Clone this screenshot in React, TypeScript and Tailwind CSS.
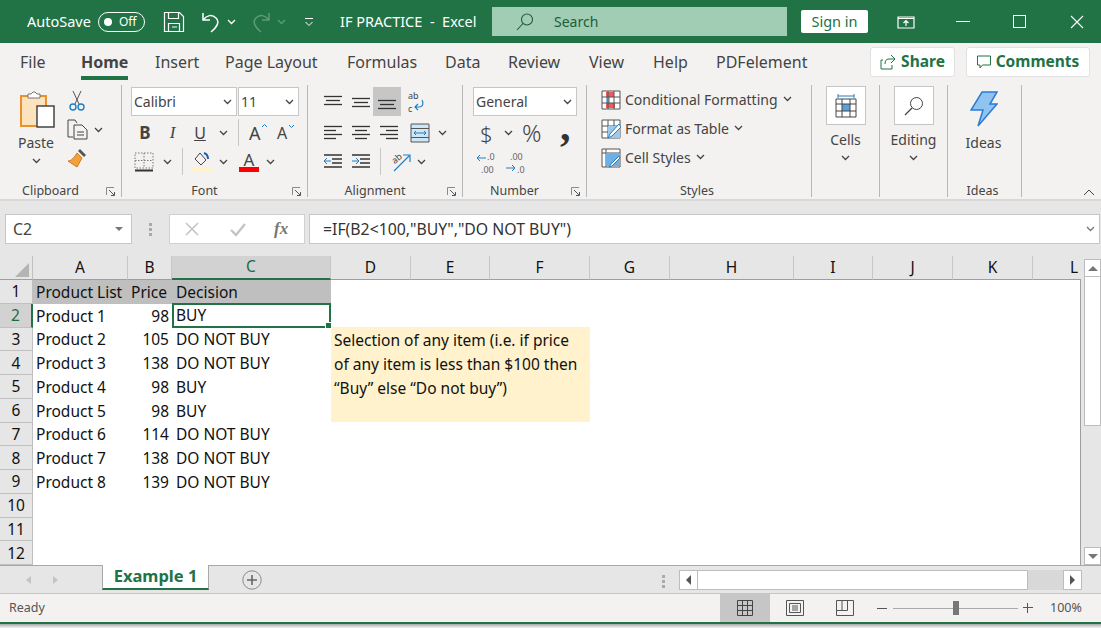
import type { ReactNode } from 'react'

const COLS = [95, 44, 159, 80, 79, 100, 80, 124, 79, 80, 80, 48]
const HEADS = ['A', 'B', 'C', 'D', 'E', 'F', 'G', 'H', 'I', 'J', 'K', 'L']
const ROWS: [string, string, string][] = [
  ['Product List', 'Price', 'Decision'],
  ['Product 1', '98', 'BUY'],
  ['Product 2', '105', 'DO NOT BUY'],
  ['Product 3', '138', 'DO NOT BUY'],
  ['Product 4', '98', 'BUY'],
  ['Product 5', '98', 'BUY'],
  ['Product 6', '114', 'DO NOT BUY'],
  ['Product 7', '138', 'DO NOT BUY'],
  ['Product 8', '139', 'DO NOT BUY'],
  ['', '', ''],
  ['', '', ''],
  ['', '', ''],
]
const TABS: [string, number][] = [['File', 61], ['Home', 74], ['Insert', 70], ['Page Layout', 122], ['Formulas', 98], ['Data', 63], ['Review', 81], ['View', 64], ['Help', 63], ['PDFelement', 92]]

function Chev({ color = '#444', className = '' }: { color?: string; className?: string }) {
  return (
    <svg width="9" height="6" viewBox="0 0 9 6" className={`shrink-0 ${className}`}>
      <path d="M1 1l3.5 3.5L8 1" fill="none" stroke={color} strokeWidth="1.3" />
    </svg>
  )
}

function Launcher() {
  return (
    <svg width="10" height="10" viewBox="0 0 10 10" className="shrink-0">
      <path d="M.5 8V.5H8" fill="none" stroke="#8a8a8a" />
      <path d="M3 3l5 5M5 8.5h3.5V5" fill="none" stroke="#555" />
    </svg>
  )
}

// horizontal text-lines icon used across the alignment group
function Lines({ rows, color = '#333' }: { rows: [number, number, number][]; color?: string }) {
  return (
    <svg width="20" height="18" viewBox="0 0 20 18" className="shrink-0">
      {rows.map(([a, b, y]) => <path key={`${a}${b}${y}`} d={`M${a} ${y + .5}H${b}`} stroke={color} strokeWidth="1.3" />)}
    </svg>
  )
}

function Group({ width, label, launcher, children }: { width: number; label: string; launcher?: boolean; children: ReactNode }) {
  return (
    <div style={{ width }} className="relative h-[112px] shrink-0 border-r border-[#b8b8b8] flex flex-col">
      <div className="h-[97px] shrink-0">{children}</div>
      <div className={`h-[18px] shrink-0 flex items-center justify-center text-[12.5px] text-[#444] leading-none ${launcher ? 'pr-[20px]' : 'pr-[4px]'}`}>{label}</div>
      {launcher && <div className="absolute right-[5px] bottom-0"><Launcher /></div>}
    </div>
  )
}

function Drop({ text, width }: { text: string; width: number }) {
  return (
    <div style={{ width }} className="h-[29px] bg-white border border-[#c6c6c6] flex items-center justify-between pl-[2px] pr-[4px] text-[14px] text-[#444]">
      <span>{text}</span><Chev />
    </div>
  )
}

function BigBtn({ label, children }: { label: string; children: ReactNode }) {
  return (
    <div className="flex flex-col items-center pt-[1px]">
      <div className="w-[40px] h-[39px] bg-white border border-[#c6c6c6] flex items-center justify-center">{children}</div>
      <div className="text-[14px] text-[#444] mt-[5px] leading-[20px]">{label}</div>
      <Chev className="mt-[5px]" />
    </div>
  )
}

function StyleRow({ icon, label }: { icon: ReactNode; label: string }) {
  return (
    <div className="h-[29px] flex items-center gap-[4px] text-[14px] text-[#444] whitespace-nowrap">
      {icon}<span>{label}</span><Chev className="-mt-[2px] ml-[1px]" />
    </div>
  )
}

const GRIDICON = 'M1 1h18v18H1zM1 7h18M1 13h18M7 1v18M13 1v18'

export default function App() {
  return (
    <div className="w-[1101px] h-[628px] overflow-hidden bg-white flex flex-col text-[#444]" style={{ fontFamily: '"Noto Sans", "Open Sans", sans-serif' }}>
      {/* title bar */}
      <div className="h-[43px] shrink-0 bg-[#217346] flex items-center text-white text-[14.5px] relative">
        <span className="ml-[27px] w-[71px]">AutoSave</span>
        <div className="w-[47px] h-[20px] rounded-full border border-white flex items-center pl-[5px] gap-[7px] text-[12px]">
          <span className="w-[8px] h-[8px] rounded-full bg-white" /><span>Off</span>
        </div>
        <svg width="22" height="22" viewBox="0 0 22 22" className="ml-[18px]">
          <path d="M1.5 1.5h15l4 4v15h-19zM5.5 1.5v6h10v-6M5.5 20.5v-8h11v8M9 16h5" fill="none" stroke="#fff" strokeWidth="1.2" />
        </svg>
        <svg width="20" height="22" viewBox="0 0 20 22" className="ml-[16px]">
          <path d="M2 2v7h7M2 9c4-5 9-6 13-2 4 4 1 9-5 14" fill="none" stroke="#fff" strokeWidth="1.5" />
        </svg>
        <Chev color="#fff" className="ml-[6px]" />
        <svg width="20" height="22" viewBox="0 0 20 22" className="ml-[15px]">
          <path d="M18 2v7h-7M18 9c-4-5-9-6-13-2-4 4-1 9 5 14" fill="none" stroke="#5d9b7a" strokeWidth="1.5" />
        </svg>
        <Chev color="#5d9b7a" className="ml-[6px]" />
        <svg width="10" height="10" viewBox="0 0 10 10" className="ml-[18px]">
          <path d="M1 1.5h8M1.5 5l3.5 3.5L8.5 5" fill="none" stroke="#fff" />
        </svg>
        <span className="ml-[26px] w-[152px] whitespace-pre">IF PRACTICE  -  Excel</span>
        <div className="w-[295px] h-[29px] bg-[#a0cdb3] flex items-center text-[#1e5c3a] text-[14px]">
          <svg width="18" height="18" viewBox="0 0 18 18" className="ml-[24px] mr-[20px]">
            <circle cx="11" cy="6.5" r="5.5" fill="none" stroke="#1e5c3a" strokeWidth="1.1" />
            <path d="M7 10.5L1 17" stroke="#1e5c3a" strokeWidth="1.1" />
          </svg>
          Search
        </div>
        <div className="ml-[14px] w-[67px] h-[23px] bg-white rounded-[2px] text-[#217346] text-[14.5px] flex items-center justify-center">Sign in</div>
        <svg width="18" height="14" viewBox="0 0 18 14" className="ml-[29px]">
          <path d="M1 2h16v11H1zM1 3.5h16M9 11V5.5M6.5 8L9 5.5 11.5 8" fill="none" stroke="#fff" strokeWidth="1.2" />
        </svg>
        <div className="ml-[41px] w-[14px] h-px bg-white" />
        <div className="ml-[43px] w-[13px] h-[13px] border border-white" />
        <svg width="14" height="14" viewBox="0 0 14 14" className="ml-[44px]">
          <path d="M1 1l12 12M13 1L1 13" stroke="#fff" strokeWidth="1.1" />
        </svg>
      </div>

      {/* ribbon tabs */}
      <div className="h-[42px] shrink-0 bg-[#f3f2f1] flex items-center text-[16px] relative pb-[4px]">
        <div className="ml-[20px] flex">
          {TABS.map(([t, w]) => (
            <div key={t} style={{ width: w }} className="whitespace-nowrap">
              {t === 'Home'
                ? <span className="relative font-bold text-[#444]">{t}<span className="absolute left-0 right-0 top-[25px] h-[4px] bg-[#217346]" /></span>
                : <span>{t}</span>}
            </div>
          ))}
        </div>
        <div className="ml-auto mr-[11px] flex gap-[11px]">
          <div className="w-[85px] h-[30px] bg-white border border-[#e1e1e1] rounded-[3px] flex items-center justify-center gap-[5px] font-bold text-[#217346] text-[15.5px]">
            <svg width="16" height="16" viewBox="0 0 16 16">
              <path d="M11 1l4 4-4 4M15 5H9C6 5 5 7 5 10M3 6H1v9h11v-4" fill="none" stroke="#217346" />
            </svg>
            Share
          </div>
          <div className="w-[124px] h-[30px] bg-white border border-[#e1e1e1] rounded-[3px] flex items-center justify-center gap-[5px] font-bold text-[#217346] text-[15.5px]">
            <svg width="14" height="14" viewBox="0 0 14 14">
              <path d="M.5 1h13v9H5.5L3 13v-3H.5z" fill="none" stroke="#217346" />
            </svg>
            Comments
          </div>
        </div>
      </div>

      {/* ribbon */}
      <div className="h-[116px] shrink-0 bg-[#f3f2f1] border-b-2 border-[#d8d8d8] flex relative">
        <Group width={122} label="Clipboard" launcher>
          <div className="flex">
            <div className="w-[64px] pl-[12px] pr-[4px] flex flex-col items-center">
              <svg width="36" height="38" viewBox="0 0 36 38" className="mt-[6px] ml-[4px]">
                <path d="M1 5h25v30H1z" fill="#fbe3bd" stroke="#e8912d" strokeWidth="2" />
                <path d="M8 7V3h3l2-2h2l2 2h3v4z" fill="#fff" stroke="#777" />
                <path d="M17 15h17v21H17z" fill="#fff" stroke="#444" strokeWidth="1.5" />
              </svg>
              <span className="text-[14px] leading-[20px] mt-[4px]">Paste</span>
              <Chev className="mt-[5px]" />
            </div>
            <div className="flex flex-col pt-[6px] pl-[3px] gap-[8px]">
              <svg width="16" height="20" viewBox="0 0 16 20" className="ml-[2px]">
                <path d="M4 0l6 13M12 0L6 13" stroke="#555" />
                <circle cx="4" cy="16" r="3" fill="none" stroke="#1f7fc4" strokeWidth="1.4" />
                <circle cx="12" cy="16" r="3" fill="none" stroke="#1f7fc4" strokeWidth="1.4" />
              </svg>
              <div className="flex items-center gap-[6px]">
                <svg width="21" height="21" viewBox="0 0 21 21">
                  <path d="M6 18H1V1h7l2 3M7 6h8l5 5v9H7zM10 13h7M10 16h7" fill="none" stroke="#444" />
                </svg>
                <Chev />
              </div>
              <svg width="20" height="20" viewBox="0 0 20 20">
                <path d="M13 1l6 6-2 2-6-6z" fill="#555" />
                <path d="M10 5l5 5-5 9-9-6c3 0 6-3 9-8z" fill="#f0a33a" stroke="#d9771c" />
              </svg>
            </div>
          </div>
        </Group>

        <Group width={186} label="Font" launcher>
          <div className="pl-[9px] pt-[2px]">
            <div className="flex gap-px"><Drop text="Calibri" width={106} /><Drop text="11" width={61} /></div>
            <div className="h-[29px] mt-[2px] flex items-center text-[#444]">
              <span className="w-[28px] text-center font-bold text-[17px]">B</span>
              <span className="w-[27px] text-center italic text-[17px]" style={{ fontFamily: '"Liberation Serif", serif' }}>I</span>
              <span className="w-[28px] text-center underline text-[16px]">U</span>
              <Chev className="ml-[5px]" />
              <div className="w-px h-[27px] bg-[#c6c6c6] ml-[10px]" />
              <span className="relative ml-[10px] w-[28px] text-[18px] leading-none">A<svg width="7" height="5" className="absolute left-[12px] -top-[1px]" viewBox="0 0 7 5"><path d="M1 4l2.5-2.5L6 4" fill="none" stroke="#1f7fc4" /></svg></span>
              <span className="relative text-[16px] leading-none">A<svg width="7" height="5" className="absolute left-[11px] -top-[1px]" viewBox="0 0 7 5"><path d="M1 1l2.5 2.5L6 1" fill="none" stroke="#1f7fc4" /></svg></span>
            </div>
            <div className="h-[29px] flex items-center">
              <svg width="20" height="20" viewBox="0 0 20 20" className="ml-[3px]">
                <path d={'M1 1h18v15H1zM1 8.5h18M10 1v15'} fill="none" stroke="#777" strokeDasharray="1.5 1.5" />
                <path d="M1 18.5h18" stroke="#333" strokeWidth="2" />
              </svg>
              <Chev className="ml-[9px]" />
              <div className="w-px h-[27px] bg-[#c6c6c6] ml-[10px]" />
              <div className="ml-[8px] w-[20px] flex flex-col items-center">
                <svg width="18" height="15" viewBox="0 0 18 15">
                  <path d="M8 1l6 7-5 5-6-6z" fill="none" stroke="#444" />
                  <path d="M12 1c3 1 4 3 4 6" fill="none" stroke="#1f5fa8" strokeWidth="2" />
                </svg>
                <div className="w-[20px] h-[5px] bg-[#fff2cc]" />
              </div>
              <Chev className="ml-[8px]" />
              <div className="ml-[11px] w-[20px] flex flex-col items-center leading-none">
                <span className="text-[17px] h-[15px] leading-[15px]">A</span>
                <div className="w-[20px] h-[5px] bg-[#ff0000]" />
              </div>
              <Chev className="ml-[7px]" />
            </div>
          </div>
        </Group>

        <Group width={155} label="Alignment" launcher>
          <div className="pl-[15px] pt-[2px]">
            <div className="h-[29px] flex items-center">
              <div className="w-[20px]"><Lines rows={[[1, 19, 3], [3, 17, 7], [1, 19, 11]]} /></div>
              <div className="ml-[8px] w-[20px]"><Lines rows={[[1, 19, 5], [3, 17, 9], [1, 19, 13]]} /></div>
              <div className="ml-[2px] w-[28px] h-[29px] bg-[#c6c6c6] flex items-center justify-center"><Lines rows={[[1, 19, 7], [3, 17, 11], [1, 19, 15]]} /></div>
              <svg width="20" height="24" viewBox="0 0 20 24" className="ml-[4px] overflow-visible">
                <text x="3" y="9" fontSize="9" fill="#444">ab</text>
                <text x="3" y="21.5" fontSize="9" fill="#444">c</text>
                <path d="M17 10c2 3 1 7-3 7H10M13 14l-3 3 3 3" fill="none" stroke="#1f7fc4" strokeWidth="1.2" />
              </svg>
            </div>
            <div className="h-[29px] mt-[2px] flex items-center">
              <div className="w-[20px]"><Lines rows={[[1, 19, 2], [1, 13, 6], [1, 19, 10], [1, 13, 14]]} /></div>
              <div className="ml-[8px] w-[20px]"><Lines rows={[[1, 19, 2], [4, 16, 6], [1, 19, 10], [4, 16, 14]]} /></div>
              <div className="ml-[8px] w-[20px]"><Lines rows={[[1, 19, 2], [7, 19, 6], [1, 19, 10], [7, 19, 14]]} /></div>
              <svg width="20" height="20" viewBox="0 0 20 20" className="ml-[11px]">
                <path d="M1 1h18v18H1z" fill="#cfe6f6" stroke="#555" />
                <path d="M1 5.5h18M1 14.5h18" stroke="#555" />
                <path d="M4 10h12M6 8l-2 2 2 2M14 8l2 2-2 2" fill="none" stroke="#1f7fc4" />
              </svg>
              <Chev className="ml-[8px]" />
            </div>
            <div className="h-[29px] flex items-center">
              <svg width="20" height="18" viewBox="0 0 20 18"><path d="M1 2h18M9 6h10M9 10h10M1 14h18" stroke="#333" strokeWidth="1.3" /><path d="M8 8H1M4 5L1 8l3 3" fill="none" stroke="#1f7fc4" /></svg>
              <svg width="20" height="18" viewBox="0 0 20 18" className="ml-[8px]"><path d="M1 2h18M9 6h10M9 10h10M1 14h18" stroke="#333" strokeWidth="1.3" /><path d="M1 8h7M5 5l3 3-3 3" fill="none" stroke="#1f7fc4" /></svg>
              <div className="w-px h-[27px] bg-[#c6c6c6] ml-[9px]" />
              <svg width="22" height="20" viewBox="0 0 22 20" className="ml-[8px] overflow-visible">
                <text x="3" y="11" fontSize="9" fill="#444" transform="rotate(-40 6 8)">ab</text>
                <path d="M5 19L20 4M14 3h7v7" fill="none" stroke="#1f7fc4" strokeWidth="1.2" />
              </svg>
              <Chev className="ml-[6px]" />
            </div>
          </div>
        </Group>

        <Group width={124} label="Number" launcher>
          <div className="pl-[10px] pt-[2px]">
            <Drop text="General" width={104} />
            <div className="h-[29px] mt-[2px] flex items-center font-light">
              <span className="ml-[7px] w-[12px] text-[22px] leading-none">$</span>
              <Chev className="ml-[12px]" />
              <span className="ml-[9px] w-[24px] text-[24px] leading-none">%</span>
              <span className="ml-[14px] h-[29px] text-[42px] font-bold leading-[16px] text-[#333]" style={{ fontFamily: '"Liberation Serif", serif' }}>,</span>
            </div>
            <div className="h-[29px] flex items-center">
              <svg width="22" height="24" viewBox="0 0 22 24" className="ml-[3px] overflow-visible">
                <text x="11" y="10" fontSize="9" fill="#666">.0</text>
                <text x="5" y="22.5" fontSize="9" fill="#666">.00</text>
                <path d="M10 8H1M4 5L1 8l3 3" fill="none" stroke="#1f7fc4" />
              </svg>
              <svg width="22" height="24" viewBox="0 0 22 24" className="ml-[7px] overflow-visible">
                <text x="5" y="10" fontSize="9" fill="#666">.00</text>
                <text x="12" y="22.5" fontSize="9" fill="#666">.0</text>
                <path d="M1 18h9M7 15l3 3-3 3" fill="none" stroke="#1f7fc4" />
              </svg>
            </div>
          </div>
        </Group>

        <Group width={225} label="Styles">
          <div className="pl-[14px] flex flex-col">
            <StyleRow label="Conditional Formatting" icon={
              <svg width="20" height="20" viewBox="0 0 20 20"><path d="M1 1h18v18H1z" fill="#fff" /><path d="M5 2h8v5H5zM5 13h9v5H5z" fill="#f05a5a" /><path d="M5 7h4v6H5z" fill="#7fb8e6" /><path d={GRIDICON} fill="none" stroke="#555" /></svg>} />
            <StyleRow label="Format as Table" icon={
              <svg width="20" height="20" viewBox="0 0 20 20"><path d={GRIDICON} fill="#fff" stroke="#555" /><path d="M7 7h12v12H7z" fill="#9cc8ec" /><path d="M18 5L9 15l-2 4 4-2 9-9z" fill="#fff" stroke="#1f7fc4" /></svg>} />
            <StyleRow label="Cell Styles" icon={
              <svg width="20" height="20" viewBox="0 0 20 20"><path d="M1 1h18v18H1zM1 5h18M5 1v18" fill="#fff" stroke="#555" /><path d="M5 5h14v13H5z" fill="#6fb0e4" /><path d="M18 8l-8 8-2 3 3-1 8-8z" fill="#fff" stroke="#1f7fc4" /></svg>} />
          </div>
        </Group>

        <Group width={68} label="">
          <div className="flex justify-center">
            <BigBtn label="Cells">
              <svg width="22" height="24" viewBox="0 0 22 24">
                <path d="M3 2h16M3 0v4M19 0v4" stroke="#1f7fc4" />
                <path d="M1 5h20v18H1z" fill="#fff" stroke="#444" />
                <path d="M7 10h8v7H7z" fill="#5aa2dc" />
                <path d="M1 10h20M1 17h20M7 5v18M15 5v18" stroke="#444" />
              </svg>
            </BigBtn>
          </div>
        </Group>
        <Group width={68} label="">
          <div className="flex justify-center">
            <BigBtn label="Editing">
              <svg width="20" height="20" viewBox="0 0 20 20">
                <circle cx="12.5" cy="7.5" r="6" fill="none" stroke="#444" />
                <path d="M8 12l-7 7" stroke="#444" strokeWidth="1.2" />
              </svg>
            </BigBtn>
          </div>
        </Group>
        <Group width={74} label="Ideas">
          <div className="flex flex-col items-center pt-[6px] pr-[2px]">
            <svg width="28" height="36" viewBox="0 0 28 36">
              <path d="M12 1h15l-7 12h7L8 35l5-16H1z" fill="#8fc3f0" stroke="#2b7cd3" strokeWidth="1.5" />
            </svg>
            <span className="text-[14px] leading-[20px] mt-[6px]">Ideas</span>
          </div>
        </Group>
        <svg width="12" height="7" viewBox="0 0 12 7" className="absolute right-[6px] bottom-[3px]">
          <path d="M1 6l5-5 5 5" fill="none" stroke="#444" />
        </svg>
      </div>

      {/* formula bar */}
      <div className="h-[55px] shrink-0 bg-[#e6e6e6] flex items-center pl-[5px] pt-[1px] text-[15.8px]">
        <div className="w-[127px] h-[30px] bg-white border border-[#c6c6c6] flex items-center justify-between pl-[7px] pr-[8px]">
          <span className="pt-px">C2</span><div className="w-0 h-0 border-x-[4px] border-x-transparent border-t-[4px] border-t-[#777]" />
        </div>
        <div className="w-[37px] flex flex-col items-center gap-[2px]">
          {[0, 1, 2].map(i => <span key={i} className="w-[3px] h-[3px] bg-[#aaa]" />)}
        </div>
        <div className="w-[136px] h-[30px] bg-white border border-[#d0d0d0] flex items-center">
          <svg width="16" height="16" viewBox="0 0 16 16" className="ml-[14px]"><path d="M2 2l12 12M14 2L2 14" stroke="#c4c4c4" strokeWidth="1.6" /></svg>
          <svg width="18" height="16" viewBox="0 0 18 16" className="ml-[29px]"><path d="M2 9l5 5L16 3" fill="none" stroke="#c4c4c4" strokeWidth="2.4" /></svg>
          <span className="ml-[27px] italic font-bold text-[#777] text-[17px]" style={{ fontFamily: '"Liberation Serif", serif' }}>fx</span>
        </div>
        <div className="ml-[4px] flex-1 h-[30px] bg-white border border-[#c6c6c6] flex items-center justify-between pl-[13px] pr-[3px] mr-[1px]">
          <span className="text-[#333] pt-px">=IF(B2&lt;100,"BUY","DO NOT BUY")</span>
          <Chev color="#777" className="mr-[1px]" />
        </div>
      </div>

      {/* sheet */}
      <div className="flex h-[309px] shrink-0 bg-[#e6e6e6]">
        <div className="w-[1081px] bg-white grid grid-rows-[24px_repeat(12,23.75px)] grid-cols-[33px_95px_44px_159px_80px_79px_100px_80px_124px_79px_80px_80px_48px] text-[15.5px] text-[#111]">
          <div className="bg-[#e6e6e6] border-b border-[#9e9e9e] border-r border-r-[#c0c0c0] flex items-end justify-end pr-[3px] pb-[2px]">
            <div className="w-0 h-0 border-l-[14px] border-l-transparent border-b-[14px] border-b-[#b4b4b4]" />
          </div>
          {HEADS.map((h, i) => (
            <div key={h} style={{ width: COLS[i] }} className={`flex items-center justify-center border-r border-r-[#c6c6c6] ${h === 'C' ? 'bg-[#d2d2d2] border-b-2 border-b-[#217346] text-[#1d6a40]' : 'bg-[#e6e6e6] border-b border-b-[#9e9e9e]'} ${h === 'L' ? 'border-r-0 pl-[34px]' : ''}`}>{h}</div>
          ))}
          {ROWS.map((r, i) => (
            <div key={i} className="contents">
              <div className={`col-start-1 pt-px flex items-center justify-center border-r border-b border-[#c0c0c0] ${i === 1 ? 'bg-[#d2d2d2] text-[#1d6a40] border-r-2 border-r-[#217346]' : 'bg-[#e6e6e6]'}`}>{i + 1}</div>
              <div className={`flex items-center pl-[3px] pt-px whitespace-nowrap ${i === 0 ? 'bg-[#bfbfbf]' : 'bg-white'}`}>{r[0]}</div>
              <div className={`flex items-center pt-px whitespace-nowrap ${i === 0 ? 'bg-[#bfbfbf] pl-[3px]' : 'bg-white justify-end pr-[3px]'}`}>{r[1]}</div>
              <div className={`relative flex items-center pt-px whitespace-nowrap ${i === 0 ? 'bg-[#bfbfbf]' : 'bg-white'} ${i === 1 ? 'border-2 border-[#217346] pl-[2px] -mt-px' : 'pl-[4px]'}`}>
                {r[2]}
                {i === 1 && <span className="absolute -right-[3px] -bottom-[3px] w-[5px] h-[5px] bg-[#217346] border border-white box-content" />}
              </div>
            </div>
          ))}
          <div className="col-start-5 col-span-3 row-start-4 row-span-4 bg-[#fff2cc] -ml-px -mt-px mb-px pl-[4px] pt-px leading-[24px] whitespace-nowrap">
            Selection of any item (i.e. if price<br />of any item is less than $100 then<br />“Buy” else “Do not buy”)
          </div>
          <div className="col-start-13 row-start-2 row-span-12 border-r border-[#9e9e9e]" />
        </div>
        {/* vertical scrollbar */}
        <div className="w-[20px] pl-[3px] pt-[3px] flex flex-col">
          <div className="h-[18px] bg-white border border-[#bdbdbd] flex items-center justify-center">
            <div className="w-0 h-0 border-x-[5px] border-x-transparent border-b-[5px] border-b-[#777]" />
          </div>
          <div className="h-[149px] bg-white border border-[#bdbdbd] border-t-0" />
          <div className="flex-1" />
          <div className="h-[18px] bg-white border border-[#bdbdbd] flex items-center justify-center">
            <div className="w-0 h-0 border-x-[5px] border-x-transparent border-t-[5px] border-t-[#777]" />
          </div>
        </div>
      </div>

      {/* sheet tabs */}
      <div className="h-[29px] shrink-0 bg-[#e6e6e6] border-t border-[#a8a8a8] border-b border-b-[#c6c6c6] flex items-start relative">
        <div className="w-[102px] h-full flex items-center pl-[26px] gap-[22px]">
          <div className="w-0 h-0 border-y-[4px] border-y-transparent border-r-[5px] border-r-[#c4c4c4]" />
          <div className="w-0 h-0 border-y-[4px] border-y-transparent border-l-[5px] border-l-[#c4c4c4]" />
        </div>
        <div className="w-[107px] h-[25px] bg-white border-x border-[#a8a8a8] border-b-2 border-b-[#217346] flex items-center justify-center text-[#217346] font-bold text-[16.5px] -mt-px">Example 1</div>
        <svg width="20" height="20" viewBox="0 0 20 20" className="ml-[33px] mt-[4px]">
          <circle cx="10" cy="10" r="9.2" fill="none" stroke="#8a8a8a" />
          <path d="M5 10h10M10 5v10" stroke="#666" strokeWidth="1.6" />
        </svg>
        <div className="ml-[400px] mt-[9px] flex flex-col gap-[2px]">
          {[0, 1, 2].map(i => <span key={i} className="w-[3px] h-[3px] bg-[#aaa]" />)}
        </div>
        <div className="ml-[14px] mt-[4px] w-[403px] h-[20px] flex">
          <div className="w-[19px] bg-white border border-[#bdbdbd] flex items-center justify-center">
            <div className="w-0 h-0 border-y-[5px] border-y-transparent border-r-[5px] border-r-[#555]" />
          </div>
          <div className="w-[330px] bg-white border border-[#bdbdbd] border-l-0" />
          <div className="flex-1 bg-[#d8d8d8]" />
          <div className="w-[19px] bg-white border border-[#bdbdbd] flex items-center justify-center">
            <div className="w-0 h-0 border-y-[5px] border-y-transparent border-l-[5px] border-l-[#555]" />
          </div>
        </div>
      </div>

      {/* status bar */}
      <div className="h-[28px] shrink-0 bg-[#f3f2f1] flex items-center text-[12.5px] text-[#555]">
        <span className="ml-[9px] w-[711px] pt-px">Ready</span>
        <div className="w-[50px] h-full bg-[#c6c6c6] flex items-center justify-center">
          <svg width="16" height="16" viewBox="0 0 16 16"><path d="M.5.5h15v15H.5zM.5 5.5h15M.5 10.5h15M5.5.5v15M10.5.5v15" fill="none" stroke="#444" /></svg>
        </div>
        <svg width="18" height="16" viewBox="0 0 18 16" className="ml-[16px]"><path d="M.5.5h17v15H.5zM3.5 3.5h11v9h-11zM6 6h6M6 8h6M6 10h6" fill="none" stroke="#555" /></svg>
        <svg width="18" height="16" viewBox="0 0 18 16" className="ml-[32px]"><path d="M.5.5h17v15H.5zM.5 10.5h11V.5M6 .5v10" fill="none" stroke="#555" /></svg>
        <div className="ml-[23px] w-[10px] h-px bg-[#555]" />
        <div className="ml-[6px] w-[125px] h-px bg-[#aaa] relative">
          <span className="absolute left-[60px] -top-[7px] w-[6px] h-[14px] bg-[#777]" />
        </div>
        <span className="ml-[5px] w-[10px] h-[10px] relative">
          <span className="absolute left-0 right-0 top-[4px] h-px bg-[#555]" />
          <span className="absolute top-0 bottom-0 left-[4px] w-px bg-[#555]" />
        </span>
        <span className="ml-[17px] pt-px">100%</span>
      </div>
      <div className="h-[2px] shrink-0 bg-[#217346]" />
      <div className="flex-1 bg-gradient-to-b from-[#a8a8a8] to-[#f4f4f4]" />
    </div>
  )
}
